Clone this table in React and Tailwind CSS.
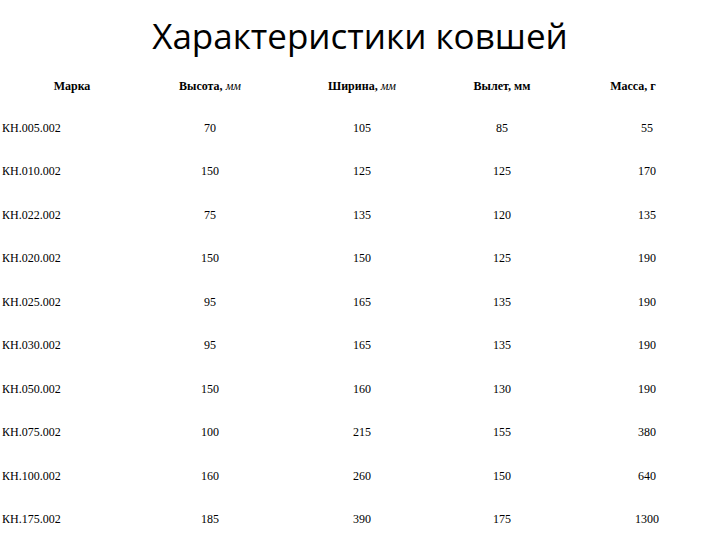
import React from "react";

const rows = [
  ["КН.005.002", "70", "105", "85", "55"],
  ["КН.010.002", "150", "125", "125", "170"],
  ["КН.022.002", "75", "135", "120", "135"],
  ["КН.020.002", "150", "150", "125", "190"],
  ["КН.025.002", "95", "165", "135", "190"],
  ["КН.030.002", "95", "165", "135", "190"],
  ["КН.050.002", "150", "160", "130", "190"],
  ["КН.075.002", "100", "215", "155", "380"],
  ["КН.100.002", "160", "260", "150", "640"],
  ["КН.175.002", "185", "390", "175", "1300"],
];

const cols = "grid grid-cols-[144px_132px_172px_108px_164px]";

const App = () => {
  return (
    <div className="w-[720px] h-[540px] bg-white text-black overflow-hidden">
      <h1 className="pt-[12px] h-[66px] text-center text-[35px] leading-[48px] font-['Open_Sans',sans-serif]">
        Характеристики ковшей
      </h1>

      <div className="font-['Liberation_Serif',serif] text-[12px]">
        {/* header */}
        <div className={`${cols} h-[40px] items-center font-bold`}>
          <div className="text-center">Марка</div>
          <div className="text-center">
            Высота, <i className="font-normal">мм</i>
          </div>
          <div className="text-center">
            Ширина, <i className="font-normal">мм</i>
          </div>
          <div className="text-center">Вылет, мм</div>
          <div className="text-center pr-[10px]">Масса, г</div>
        </div>

        {/* data */}
        {rows.map((r) => (
          <div key={r[0]} className={`${cols} h-[43.5px] items-center`}>
            <div className="pl-[2px]">{r[0]}</div>
            <div className="text-center">{r[1]}</div>
            <div className="text-center">{r[2]}</div>
            <div className="text-center">{r[3]}</div>
            <div className="text-center pl-[18px]">{r[4]}</div>
          </div>
        ))}
      </div>
    </div>
  );
};

export default App;
